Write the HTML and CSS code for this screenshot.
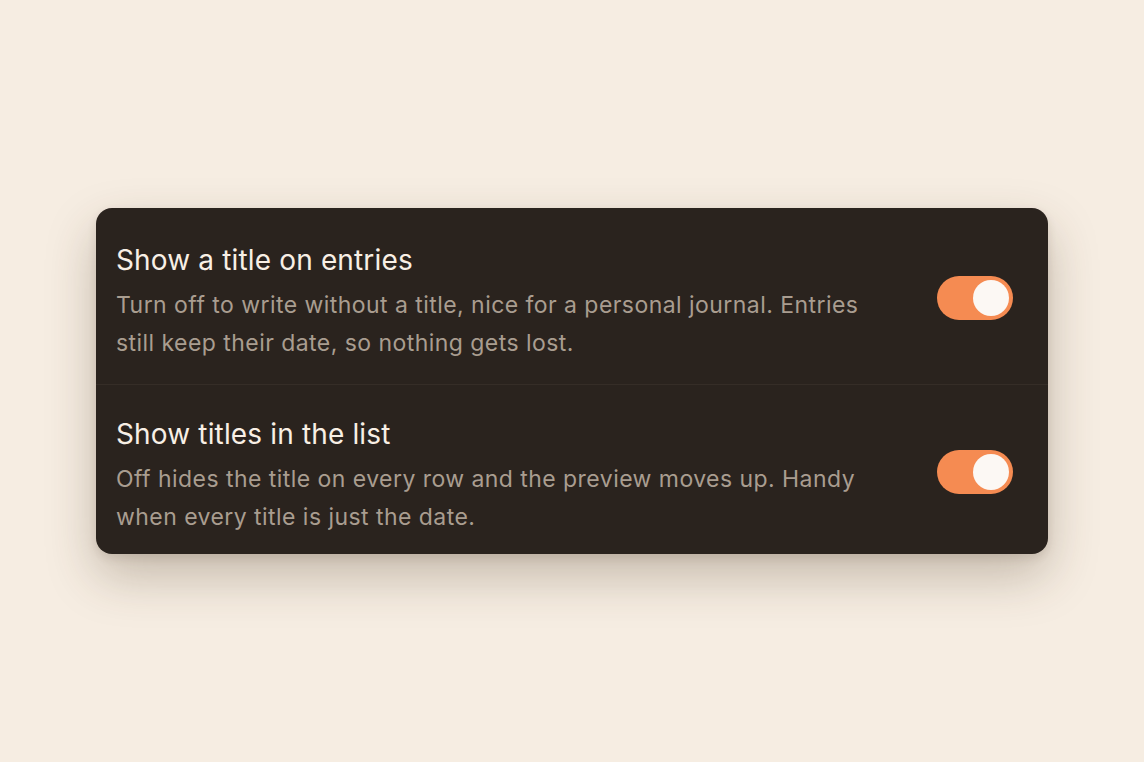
FILE: index.html
```html
<!DOCTYPE html>
<html lang="en">

<head>
    <meta charset="UTF-8">
    <meta name="viewport" content="width=device-width, initial-scale=1.0">
    <title>Settings</title>
    <link rel="stylesheet" href="styles.css">
</head>

<body>
    <div class="panel">
        <div class="fila">
            <div class="texto">
                <p class="tituloFila">Show a title on entries</p>
                <p class="descripcion">Turn off to write without a title, nice for a personal journal. Entries still keep their date, so nothing gets lost.</p>
            </div>
            <button class="interruptor activo" aria-label="Show a title on entries"><span class="bolita"></span></button>
        </div>
        <div class="fila">
            <div class="texto">
                <p class="tituloFila">Show titles in the list</p>
                <p class="descripcion">Off hides the title on every row and the preview moves up. Handy when every title is just the date.</p>
            </div>
            <button class="interruptor activo" aria-label="Show titles in the list"><span class="bolita"></span></button>
        </div>
    </div>
</body>

</html>
```

FILE: styles.css
```css
html {
    font-family: Inter, 'Noto Sans', sans-serif;
}

body {
    background-color: #f6ede2;
    margin: 0;
    height: 762px;
    display: flex;
    align-items: flex-start;
    justify-content: center;
}

.panel {
    margin-top: 208px;
    width: 952px;
    background-color: #2a231e;
    border-radius: 16px;
    box-shadow: 0 22px 50px rgba(70, 50, 30, 0.28), 0 4px 10px rgba(70, 50, 30, 0.12);
}

.fila {
    display: flex;
    align-items: center;
    gap: 64px;
    padding: 34px 35px 22px 20px;
}

.fila + .fila {
    border-top: 1px solid #352d27;
    padding-top: 31px;
    padding-bottom: 18px;
}

.texto {
    flex: 1;
}

.tituloFila {
    margin: 0;
    color: #f8efe5;
    font-size: 28px;
    line-height: 36px;
    font-weight: 400;
    letter-spacing: 0.15px;
}

.descripcion {
    margin: 8px 0 0 0;
    color: #a99d90;
    font-size: 23px;
    line-height: 38px;
    letter-spacing: 0.45px;
}

.interruptor {
    width: 76px;
    height: 44px;
    margin-bottom: 8px;
    border: none;
    border-radius: 22px;
    padding: 4px;
    background-color: #f58b52;
    display: flex;
    justify-content: flex-end;
    flex-shrink: 0;
}

.bolita {
    width: 36px;
    height: 36px;
    border-radius: 50%;
    background-color: #fcf8f4;
}
```
